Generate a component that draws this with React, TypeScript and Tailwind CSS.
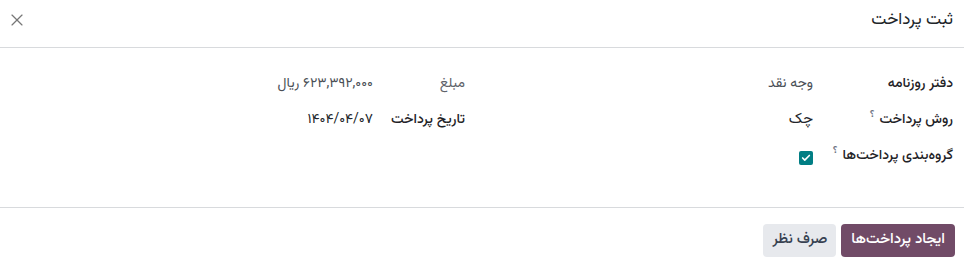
import { X, Check } from 'lucide-react'

function Row({ label, help, children, bold = true, muted = false, labelW }: { label: string; help?: boolean; children: React.ReactNode; bold?: boolean; muted?: boolean; labelW: string }) {
  return (
    <div className="flex h-[36px] items-center whitespace-nowrap">
      <div className={`${labelW} shrink-0 ${bold ? 'font-medium text-[#1f2327]' : 'text-[#5f636a]'}`}>
        {label}
        {help && <sup className="mr-[5px] text-[11px] font-medium text-[#6b7280]">؟</sup>}
      </div>
      <div className={muted ? 'text-[#4a4f56]' : 'text-[#212529]'}>{children}</div>
    </div>
  )
}

export default function App() {
  return (
    <div
      dir="rtl"
      className="h-[264px] w-[964px] bg-white text-[14px] text-[#212529]"
      style={{ fontFamily: 'Vazirmatn, "Noto Sans Arabic", "DejaVu Sans", sans-serif' }}
    >
      <div className="flex h-[48px] items-start justify-between border-b border-[#d8dadd] pr-[11px] pl-[7px] pt-[7px]">
        <h4 className="text-[17px] font-normal leading-[26px]">ثبت پرداخت</h4>
        <button className="mt-[3px] text-[#777]">
          <X className="h-[20px] w-[20px]" strokeWidth={1.4} />
        </button>
      </div>

      <div className="flex h-[159px] pt-[18px] pr-[11px]">
        <div className="w-[471px] shrink-0">
          <Row label="دفتر روزنامه" labelW="w-[140px]" muted>
            وجه نقد
          </Row>
          <Row label="روش پرداخت" help labelW="w-[140px]">
            <span className="text-[15px]">چک</span>
          </Row>
          <Row label="گروه‌بندی پرداخت‌ها" help labelW="w-[140px]">
            <span className="mt-[3px] flex h-[14px] w-[14px] items-center justify-center rounded-[2px] bg-[#017e84] text-white">
              <Check className="h-[10px] w-[10px]" strokeWidth={4} />
            </span>
          </Row>
        </div>
        <div className="pr-[17px]">
          <Row label="مبلغ" bold={false} labelW="w-[92px]" muted>
            ۶۲۳,۳۹۲,۰۰۰ ریال
          </Row>
          <Row label="تاریخ پرداخت" labelW="w-[92px]">
            ۱۴۰۴/۰۴/۰۷
          </Row>
        </div>
      </div>

      <div className="flex gap-[5px] border-t border-[#d8dadd] px-[9px] pt-[16px]">
        <button className="h-[33px] rounded-[4px] bg-[#714b67] px-[10px] text-[15px] font-medium text-white">ایجاد پرداخت‌ها</button>
        <button className="h-[33px] rounded-[4px] bg-[#e7e9ed] px-[9px] text-[15px] font-medium text-[#374151]">صرف نظر</button>
      </div>
    </div>
  )
}
